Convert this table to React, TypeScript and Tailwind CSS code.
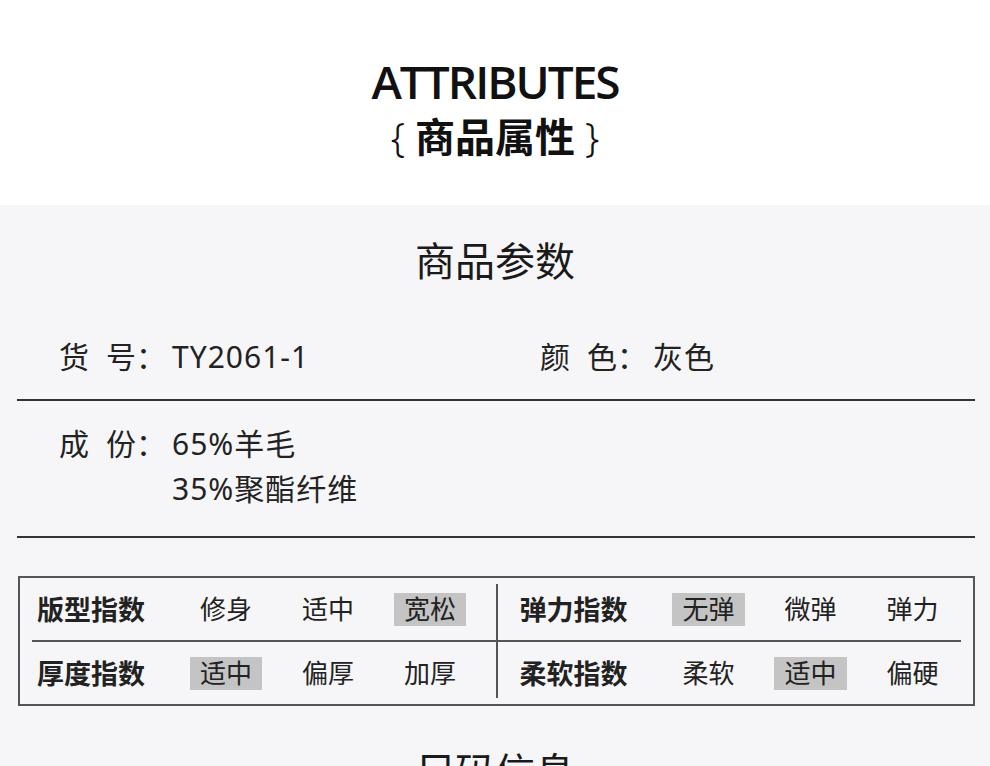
import React from "react";

const CJK = "'Noto Sans', 'Noto Sans CJK SC', sans-serif";

function Opt({ t, on }: { t: string; on?: boolean }) {
  return (
    <div className="w-[102px] flex justify-center">
      <span
        className={
          "inline-flex items-center h-[33px] px-[10px] text-[26px] leading-none text-[#222] " +
          (on ? "bg-[#c4c4c4]" : "")
        }
      >
        {t}
      </span>
    </div>
  );
}

function Half({
  rows,
  side,
}: {
  rows: { label: string; opts: { t: string; on?: boolean }[] }[];
  side: "l" | "r";
}) {
  return (
    <div className="flex-1 flex flex-col">
      {rows.map((r, i) => (
        <React.Fragment key={i}>
          {i > 0 && (
            <div
              className={
                "h-[2px] shrink-0 bg-[#555] " + (side === "l" ? "ml-[12px]" : "mr-[12px]")
              }
            />
          )}
          <div
            className={
              "h-[62px] shrink-0 flex items-center " + (side === "l" ? "pl-[17px]" : "pl-[22px]")
            }
          >
            <div className="w-[138px] text-[27px] font-bold leading-none text-[#222]">
              {r.label}
            </div>
            {r.opts.map((o, j) => (
              <Opt key={j} t={o.t} on={o.on} />
            ))}
          </div>
        </React.Fragment>
      ))}
    </div>
  );
}

export default function App() {
  return (
    <div className="w-[990px] h-[766px] overflow-hidden bg-white" style={{ fontFamily: CJK }}>
      <div className="h-[205px] bg-white flex flex-col items-center pt-[58px]">
        <div
          className="text-[46px] leading-[46px] font-semibold text-[#111] tracking-[-2px]"
          style={{ fontFamily: "'Open Sans', sans-serif" }}
        >
          ATTRIBUTES
        </div>
        <div className="mt-[13px] flex items-center text-[40px] leading-[40px] text-[#111]">
          <span className="font-light text-[40px] mr-[10px]">{"{"}</span>
          <span className="font-bold">商品属性</span>
          <span className="font-light text-[40px] ml-[10px]">{"}"}</span>
        </div>
      </div>
      <div className="bg-[#f6f6f8] pb-[40px]">
        <div className="pt-[36px] text-center text-[40px] leading-[40px] text-[#1a1a1a]">
          商品参数
        </div>
        <div className="mt-[61px] h-[30px] flex text-[30px] leading-[30px] text-[#222]">
          <div className="w-[540px] pl-[59px] flex">
            <span>货</span>
            <span className="ml-[17px]">号：</span>
            <span className="ml-[6px] tracking-[1px]">TY2061-1</span>
          </div>
          <div className="flex">
            <span>颜</span>
            <span className="ml-[17px]">色：</span>
            <span className="ml-[6px] tracking-[1px]">灰色</span>
          </div>
        </div>
        <div className="mt-[27px] ml-[17px] mr-[15px] h-[2px] bg-[#333]" />
        <div className="mt-[20px] pl-[59px] flex text-[30px] leading-[45px] text-[#222]">
          <span>成</span>
          <span className="ml-[17px]">份：</span>
          <div className="ml-[6px] flex flex-col tracking-[1px]">
            <span>65%羊毛</span>
            <span>35%聚酯纤维</span>
          </div>
        </div>
        <div className="mt-[25px] ml-[17px] mr-[15px] h-[2px] bg-[#333]" />
        <div className="mt-[38px] ml-[18px] mr-[15px] h-[130px] border-2 border-[#555] flex">
          <Half
            side="l"
            rows={[
              { label: "版型指数", opts: [{ t: "修身" }, { t: "适中" }, { t: "宽松", on: true }] },
              { label: "厚度指数", opts: [{ t: "适中", on: true }, { t: "偏厚" }, { t: "加厚" }] },
            ]}
          />
          <div className="w-[2px] my-[6px] bg-[#555]" />
          <Half
            side="r"
            rows={[
              { label: "弹力指数", opts: [{ t: "无弹", on: true }, { t: "微弹" }, { t: "弹力" }] },
              { label: "柔软指数", opts: [{ t: "柔软" }, { t: "适中", on: true }, { t: "偏硬" }] },
            ]}
          />
        </div>
        <div className="mt-[46px] text-center text-[40px] leading-[40px] text-[#1a1a1a]">
          尺码信息
        </div>
      </div>
    </div>
  );
}
